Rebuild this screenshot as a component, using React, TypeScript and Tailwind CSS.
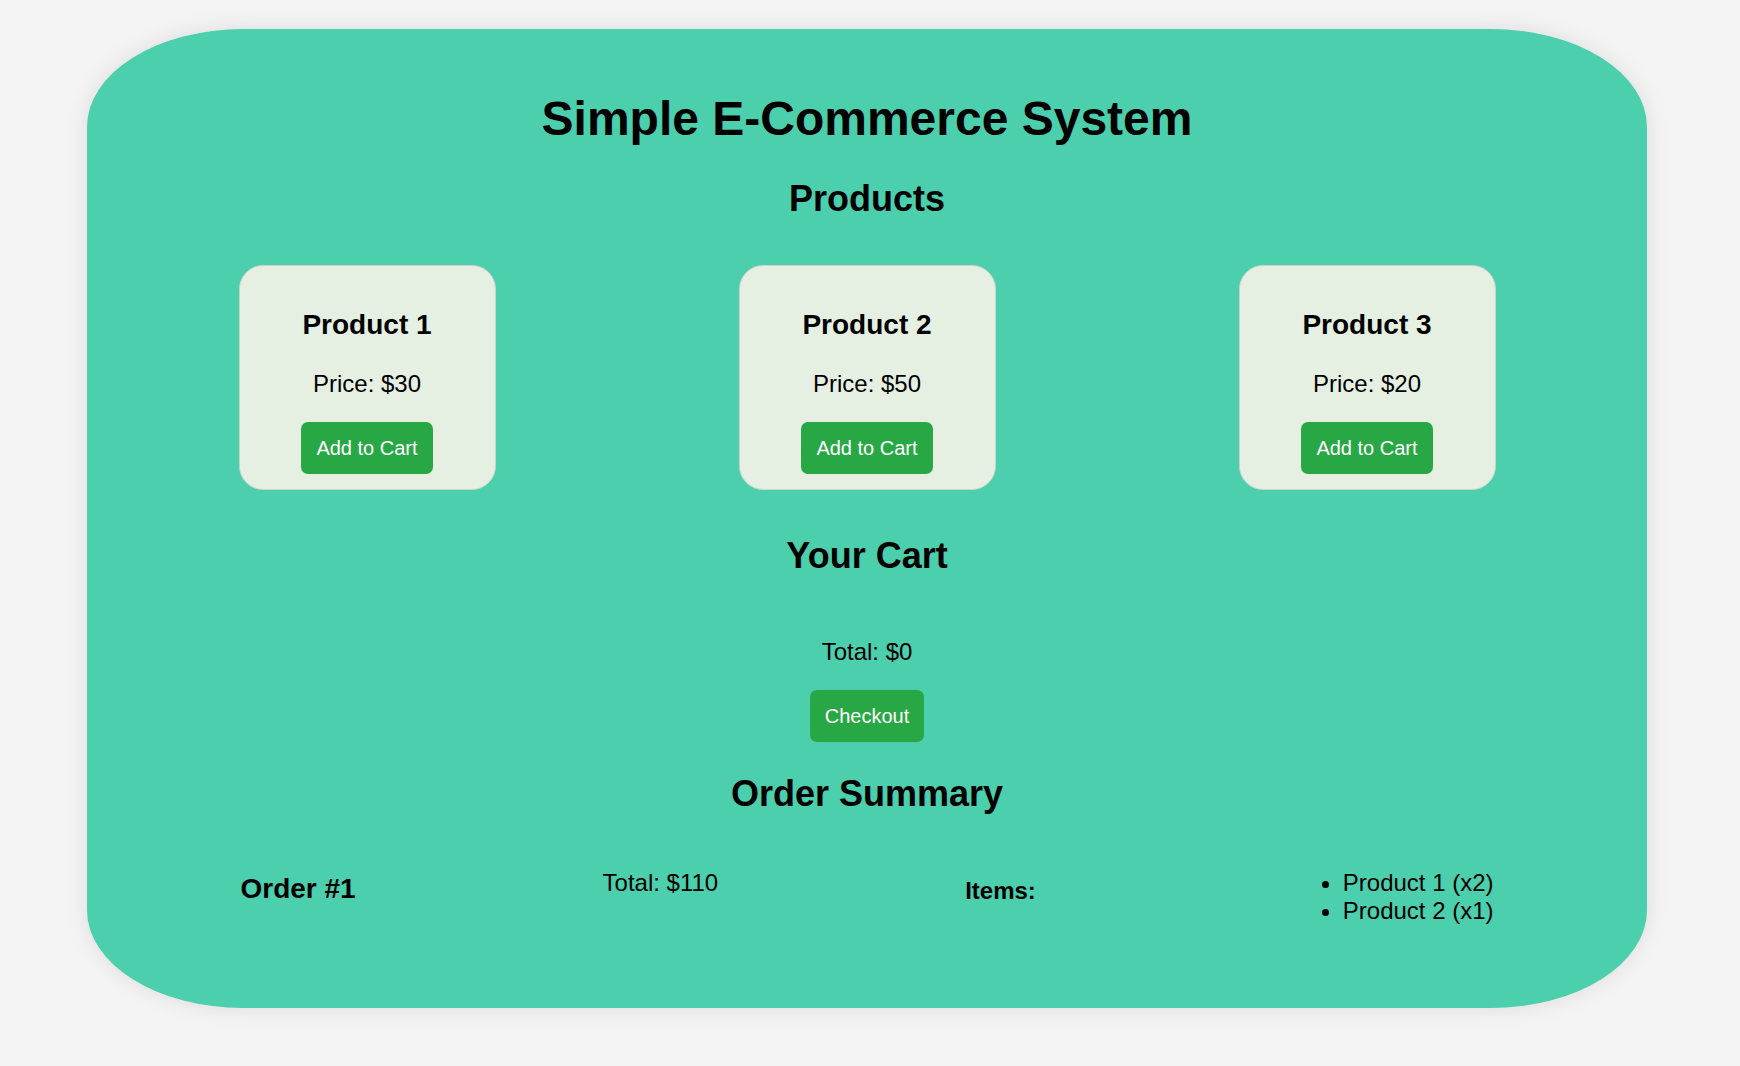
import React from 'react';

interface Product {
  id: number;
  name: string;
  price: number;
}

const products: Product[] = [
  { id: 1, name: 'Product 1', price: 30 },
  { id: 2, name: 'Product 2', price: 50 },
  { id: 3, name: 'Product 3', price: 20 },
];

const ProductCard: React.FC<{ product: Product }> = ({ product }) => (
  <div className="w-[257px] bg-[#e5f0e3] border border-[#cdd3cc] rounded-[24px] p-[15px] text-center">
    <h3 className="mt-[28px] text-[28px] leading-[32px] font-bold">{product.name}</h3>
    <p className="mt-[29px] text-[24px] leading-[28px]">Price: ${product.price}</p>
    <button className="mt-[24px] bg-[#28a745] text-white text-[20px] leading-[22px] px-[15px] py-[15px] rounded-[7px]">
      Add to Cart
    </button>
  </div>
);

export default function App() {
  return (
    <div
      className="min-h-screen bg-[#f4f4f4] pt-[29px] pb-[58px] text-black"
      style={{ fontFamily: '"Liberation Sans", Arial, sans-serif' }}
    >
      <div className="ml-[87px] w-[1560px] rounded-[10%] bg-[#4bcfad] p-[30px] shadow-[0_0_22px_rgba(0,0,0,0.1)] text-center">
        <h1 className="mt-[32px] text-[48px] leading-[55px] font-bold">Simple E-Commerce System</h1>

        {/* Products */}
        <h2 className="mt-[32px] text-[36px] leading-[41px] font-bold">Products</h2>
        <div className="mt-[46px] flex justify-around">
          {products.map((p) => (
            <ProductCard key={p.id} product={p} />
          ))}
        </div>

        {/* Cart */}
        <h2 className="mt-[45px] text-[36px] leading-[41px] font-bold">Your Cart</h2>
        <p className="mt-[62px] text-[24px] leading-[28px]">Total: $0</p>
        <button className="mt-[24px] bg-[#28a745] text-white text-[20px] leading-[22px] px-[15px] py-[15px] rounded-[7px]">
          Checkout
        </button>

        {/* Orders */}
        <h2 className="mt-[31px] text-[36px] leading-[41px] font-bold">Order Summary</h2>
        <div className="mt-[31px] mb-[53px] flex justify-around items-start text-left">
          <h3 className="mt-[28px] text-[28px] leading-[32px] font-bold">Order #1</h3>
          <p className="mt-[24px] text-[24px] leading-[28px]">Total: $110</p>
          <h4 className="mt-[32px] text-[24px] leading-[28px] font-bold">Items:</h4>
          <ul className="mt-[24px] pl-[60px] list-disc text-[24px] leading-[28px]">
            <li>Product 1 (x2)</li>
            <li>Product 2 (x1)</li>
          </ul>
        </div>
      </div>
    </div>
  );
}
